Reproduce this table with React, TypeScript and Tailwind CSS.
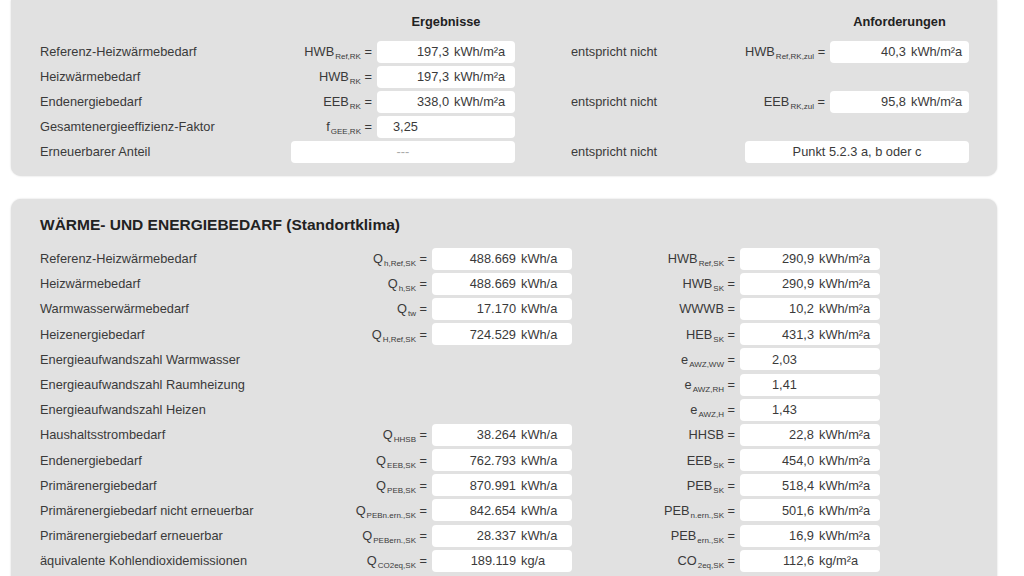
import React from 'react';

// Energieausweis – Ergebnisse und Wärme-/Energiebedarf

type Sym = { base: string; sub?: string };

function Symbol({ base, sub }: Sym) {
  return (
    <span className="whitespace-nowrap">
      {base}
      {sub && <sub className="text-[8px] relative -bottom-[3px] ml-[1px]">{sub}</sub>}
      {' ='}
    </span>
  );
}

type Val = { value: string; unit?: string };

function Box({ value, unit, w, numW, pl }: Val & { w: string; numW: string; pl: string }) {
  return (
    <div className={`${w} h-[22px] bg-white rounded-[4px] flex items-center whitespace-nowrap`}>
      {unit ? (
        <>
          <span className={`${numW} text-right`}>{value}</span>
          <span className="ml-[5px]">{unit}</span>
        </>
      ) : (
        <span className={pl}>{value}</span>
      )}
    </div>
  );
}

const topRows: {
  label: string;
  sym?: Sym;
  val?: Val;
  wide?: string;
  status?: string;
  rsym?: Sym;
  rval?: Val;
  punkt?: string;
}[] = [
  {
    label: 'Referenz-Heizwärmebedarf',
    sym: { base: 'HWB', sub: 'Ref,RK' },
    val: { value: '197,3', unit: 'kWh/m²a' },
    status: 'entspricht nicht',
    rsym: { base: 'HWB', sub: 'Ref,RK,zul' },
    rval: { value: '40,3', unit: 'kWh/m²a' },
  },
  {
    label: 'Heizwärmebedarf',
    sym: { base: 'HWB', sub: 'RK' },
    val: { value: '197,3', unit: 'kWh/m²a' },
  },
  {
    label: 'Endenergiebedarf',
    sym: { base: 'EEB', sub: 'RK' },
    val: { value: '338,0', unit: 'kWh/m²a' },
    status: 'entspricht nicht',
    rsym: { base: 'EEB', sub: 'RK,zul' },
    rval: { value: '95,8', unit: 'kWh/m²a' },
  },
  {
    label: 'Gesamtenergieeffizienz-Faktor',
    sym: { base: 'f', sub: 'GEE,RK' },
    val: { value: '3,25' },
  },
  {
    label: 'Erneuerbarer Anteil',
    wide: '---',
    status: 'entspricht nicht',
    punkt: 'Punkt 5.2.3 a, b oder c',
  },
];

const bedarf: { label: string; q?: Sym; qv?: Val; r: Sym; rv: Val }[] = [
  { label: 'Referenz-Heizwärmebedarf', q: { base: 'Q', sub: 'h,Ref,SK' }, qv: { value: '488.669', unit: 'kWh/a' }, r: { base: 'HWB', sub: 'Ref,SK' }, rv: { value: '290,9', unit: 'kWh/m²a' } },
  { label: 'Heizwärmebedarf', q: { base: 'Q', sub: 'h,SK' }, qv: { value: '488.669', unit: 'kWh/a' }, r: { base: 'HWB', sub: 'SK' }, rv: { value: '290,9', unit: 'kWh/m²a' } },
  { label: 'Warmwasserwärmebedarf', q: { base: 'Q', sub: 'tw' }, qv: { value: '17.170', unit: 'kWh/a' }, r: { base: 'WWWB' }, rv: { value: '10,2', unit: 'kWh/m²a' } },
  { label: 'Heizenergiebedarf', q: { base: 'Q', sub: 'H,Ref,SK' }, qv: { value: '724.529', unit: 'kWh/a' }, r: { base: 'HEB', sub: 'SK' }, rv: { value: '431,3', unit: 'kWh/m²a' } },
  { label: 'Energieaufwandszahl Warmwasser', r: { base: 'e', sub: 'AWZ,WW' }, rv: { value: '2,03' } },
  { label: 'Energieaufwandszahl Raumheizung', r: { base: 'e', sub: 'AWZ,RH' }, rv: { value: '1,41' } },
  { label: 'Energieaufwandszahl Heizen', r: { base: 'e', sub: 'AWZ,H' }, rv: { value: '1,43' } },
  { label: 'Haushaltsstrombedarf', q: { base: 'Q', sub: 'HHSB' }, qv: { value: '38.264', unit: 'kWh/a' }, r: { base: 'HHSB' }, rv: { value: '22,8', unit: 'kWh/m²a' } },
  { label: 'Endenergiebedarf', q: { base: 'Q', sub: 'EEB,SK' }, qv: { value: '762.793', unit: 'kWh/a' }, r: { base: 'EEB', sub: 'SK' }, rv: { value: '454,0', unit: 'kWh/m²a' } },
  { label: 'Primärenergiebedarf', q: { base: 'Q', sub: 'PEB,SK' }, qv: { value: '870.991', unit: 'kWh/a' }, r: { base: 'PEB', sub: 'SK' }, rv: { value: '518,4', unit: 'kWh/m²a' } },
  { label: 'Primärenergiebedarf nicht erneuerbar', q: { base: 'Q', sub: 'PEBn.ern.,SK' }, qv: { value: '842.654', unit: 'kWh/a' }, r: { base: 'PEB', sub: 'n.ern.,SK' }, rv: { value: '501,6', unit: 'kWh/m²a' } },
  { label: 'Primärenergiebedarf erneuerbar', q: { base: 'Q', sub: 'PEBern.,SK' }, qv: { value: '28.337', unit: 'kWh/a' }, r: { base: 'PEB', sub: 'ern.,SK' }, rv: { value: '16,9', unit: 'kWh/m²a' } },
  { label: 'äquivalente Kohlendioxidemissionen', q: { base: 'Q', sub: 'CO2eq,SK' }, qv: { value: '189.119', unit: 'kg/a' }, r: { base: 'CO', sub: '2eq,SK' }, rv: { value: '112,6', unit: 'kg/m²a' } },
];

export default function App() {
  return (
    <div className="w-[1024px] h-[576px] overflow-hidden bg-white font-['Liberation_Sans',Arial,sans-serif] text-[12.8px] text-[#3a3a3a]">
      {/* Ergebnisse / Anforderungen */}
      <section className="ml-[11px] w-[986px] bg-[#e1e1e1] rounded-b-[10px] shadow-[0_0_2px_rgba(0,0,0,0.18)] pt-[10px] pb-[12px] pl-[29px]">
        <div className="flex h-[24px] items-center mb-[5px] font-bold text-[#222]">
          <div className="w-[337px]" />
          <div className="w-[138px] text-center">Ergebnisse</div>
          <div className="w-[315px]" />
          <div className="w-[139px] text-center">Anforderungen</div>
        </div>
        {topRows.map((r) => (
          <div key={r.label} className="flex h-[25px] items-center">
            <div className="w-[251px]">{r.label}</div>
            {r.wide ? (
              <div className="w-[224px] h-[22px] bg-white rounded-[4px] flex items-center justify-center text-[#aaa]">
                {r.wide}
              </div>
            ) : (
              <>
                <div className="w-[86px] text-right pr-[5px]">{r.sym && <Symbol {...r.sym} />}</div>
                <Box {...r.val!} w="w-[138px]" numW="w-[72px]" pl="pl-[16px]" />
              </>
            )}
            <div className="w-[56px]" />
            <div className="w-[174px]">{r.status}</div>
            {r.punkt ? (
              <div className="w-[224px] h-[22px] bg-white rounded-[4px] flex items-center justify-center">
                {r.punkt}
              </div>
            ) : r.rsym ? (
              <>
                <div className="w-[85px] text-right pr-[5px]">
                  <Symbol {...r.rsym} />
                </div>
                <Box {...r.rval!} w="w-[139px]" numW="w-[76px]" pl="pl-[16px]" />
              </>
            ) : null}
          </div>
        ))}
      </section>

      {/* Wärme- und Energiebedarf */}
      <section className="mt-[23px] ml-[11px] w-[986px] bg-[#e1e1e1] rounded-[10px] shadow-[0_0_2px_rgba(0,0,0,0.18)] pt-[16px] pb-[20px] pl-[29px]">
        <h2 className="h-[20px] leading-[20px] mb-[11px] text-[15.5px] font-bold text-[#222]">
          WÄRME- UND ENERGIEBEDARF (Standortklima)
        </h2>
        {bedarf.map((r) => (
          <div key={r.label} className="flex h-[25.2px] items-center">
            <div className="w-[300px]">{r.label}</div>
            <div className="w-[92px] text-right pr-[5px]">{r.q && <Symbol {...r.q} />}</div>
            {r.qv ? <Box {...r.qv} w="w-[140px]" numW="w-[84px]" pl="pl-[16px]" /> : <div className="w-[140px]" />}
            <div className="w-[168px] text-right pr-[5px]">
              <Symbol {...r.r} />
            </div>
            <Box {...r.rv} w="w-[140px]" numW="w-[74px]" pl="pl-[32px]" />
          </div>
        ))}
      </section>
    </div>
  );
}
